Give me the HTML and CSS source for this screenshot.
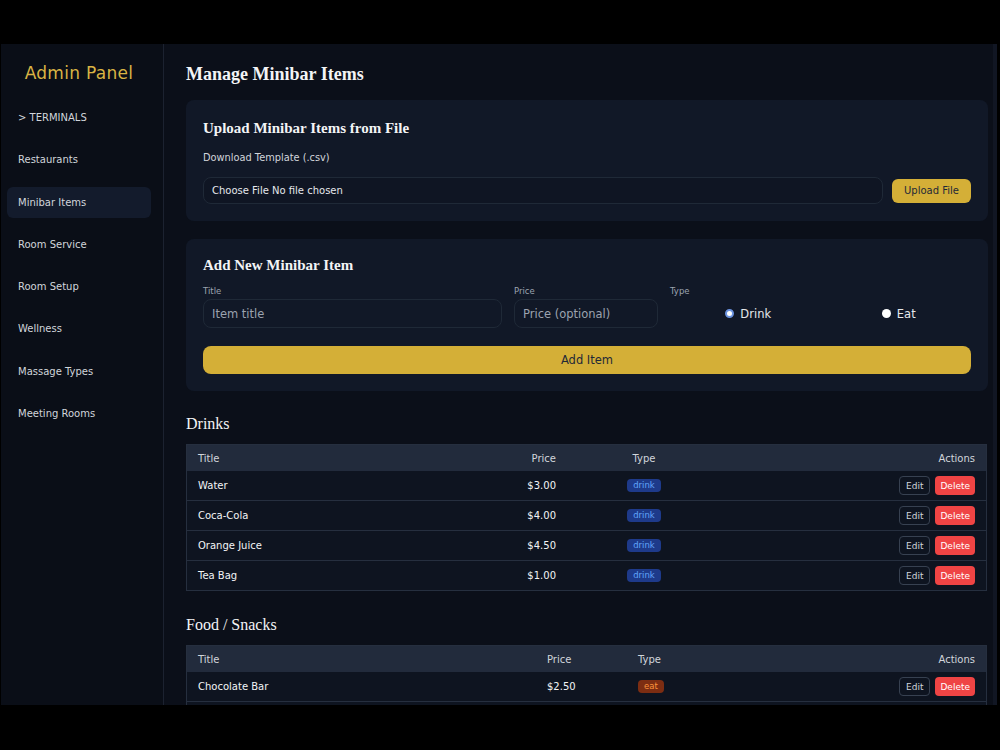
FILE: index.html
```html
<!DOCTYPE html>
<html lang="en">
<head>
    <meta charset="UTF-8">
    <meta name="viewport" content="width=device-width, initial-scale=1.0">
    <title>Admin Panel - Minibar Items</title>
    <link rel="stylesheet" href="styles.css">
</head>
<body>
    <div class="screen">
        <aside class="sidebar">
            <div class="brand">Admin Panel</div>
            <nav class="nav">
                <a class="nav-link">&gt; TERMINALS</a>
                <a class="nav-link">Restaurants</a>
                <a class="nav-link active">Minibar Items</a>
                <a class="nav-link">Room Service</a>
                <a class="nav-link">Room Setup</a>
                <a class="nav-link">Wellness</a>
                <a class="nav-link">Massage Types</a>
                <a class="nav-link">Meeting Rooms</a>
            </nav>
        </aside>

        <main class="main">
            <h1 class="page-title">Manage Minibar Items</h1>

            <section class="card">
                <h2 class="card-title">Upload Minibar Items from File</h2>
                <a class="template-link">Download Template (.csv)</a>
                <div class="upload-row">
                    <div class="file-input">Choose File No file chosen</div>
                    <button class="btn-gold btn-upload">Upload File</button>
                </div>
            </section>

            <section class="card form-card">
                <h2 class="card-title">Add New Minibar Item</h2>
                <div class="form-row">
                    <div class="field field-title">
                        <label>Title</label>
                        <input type="text" placeholder="Item title">
                    </div>
                    <div class="field field-price">
                        <label>Price</label>
                        <input type="text" placeholder="Price (optional)">
                    </div>
                    <div class="field field-type">
                        <label>Type</label>
                        <div class="radios">
                            <span class="radio"><span class="dot checked"></span>Drink</span>
                            <span class="radio"><span class="dot"></span>Eat</span>
                        </div>
                    </div>
                </div>
                <button class="btn-gold btn-add">Add Item</button>
            </section>

            <h3 class="section-title">Drinks</h3>
            <table class="items">
                <thead>
                    <tr><th>Title</th><th class="col-price">Price</th><th class="col-type">Type</th><th class="col-actions">Actions</th></tr>
                </thead>
                <tbody>
                    <tr><td>Water</td><td class="col-price">$3.00</td><td class="col-type"><span class="badge drink">drink</span></td><td class="col-actions"><button class="btn-edit">Edit</button><button class="btn-delete">Delete</button></td></tr>
                    <tr><td>Coca-Cola</td><td class="col-price">$4.00</td><td class="col-type"><span class="badge drink">drink</span></td><td class="col-actions"><button class="btn-edit">Edit</button><button class="btn-delete">Delete</button></td></tr>
                    <tr><td>Orange Juice</td><td class="col-price">$4.50</td><td class="col-type"><span class="badge drink">drink</span></td><td class="col-actions"><button class="btn-edit">Edit</button><button class="btn-delete">Delete</button></td></tr>
                    <tr><td>Tea Bag</td><td class="col-price">$1.00</td><td class="col-type"><span class="badge drink">drink</span></td><td class="col-actions"><button class="btn-edit">Edit</button><button class="btn-delete">Delete</button></td></tr>
                </tbody>
            </table>

            <h3 class="section-title food-title">Food / Snacks</h3>
            <table class="items food">
                <thead>
                    <tr><th>Title</th><th class="col-price">Price</th><th class="col-type">Type</th><th class="col-actions">Actions</th></tr>
                </thead>
                <tbody>
                    <tr><td>Chocolate Bar</td><td class="col-price">$2.50</td><td class="col-type"><span class="badge eat">eat</span></td><td class="col-actions"><button class="btn-edit">Edit</button><button class="btn-delete">Delete</button></td></tr>
                    <tr class="spacer"><td colspan="4"></td></tr>
                </tbody>
            </table>
        </main>
    </div>
</body>
</html>
```

FILE: styles.css
```css
html, body {
    margin: 0;
    padding: 0;
    background: #000;
}
body {
    font-family: "DejaVu Sans", "Open Sans", sans-serif;
    color: #e5e7eb;
}
.screen {
    margin: 44px 3px 0 1px;
    height: 661px;
    display: flex;
    overflow: hidden;
    background: #0b0f19;
    border-right: 4px solid #111623;
}
.sidebar {
    width: 163px;
    flex-shrink: 0;
    background: #0a0e17;
    border-right: 1px solid #1c2230;
    padding: 0 12px 0 6px;
    box-sizing: border-box;
}
.brand {
    color: #d9b444;
    font-size: 17px;
    text-align: center;
    margin: 18px 0 18px;
    line-height: 22px;
    letter-spacing: 0.3px;
}
.nav {
    display: flex;
    flex-direction: column;
    gap: 11.3px;
}
.nav-link {
    display: block;
    font-size: 10px;
    color: #d1d5db;
    padding: 0 11px;
    height: 31px;
    line-height: 31px;
    border-radius: 6px;
}
.nav-link.active {
    background: #131b2c;
}

.main {
    flex: 1;
    padding: 0 5px 0 22px;
}
.page-title {
    font-family: "Liberation Serif", "DejaVu Serif", serif;
    font-size: 18px;
    font-weight: bold;
    color: #f3f4f6;
    margin: 19px 0 15px;
    line-height: 22px;
}
.card {
    background: #111827;
    border-radius: 8px;
    padding: 18px 17px 17px 17px;
    margin-bottom: 18px;
}
.card-title {
    font-family: "Liberation Serif", "DejaVu Serif", serif;
    font-size: 15px;
    font-weight: bold;
    color: #f3f4f6;
    margin: 0 0 13px;
    line-height: 20px;
}
.form-card {
    padding-top: 16px;
}
.form-card .card-title {
    margin-bottom: 10px;
}
.template-link {
    display: block;
    font-size: 9.8px;
    color: #d1d5db;
    line-height: 14px;
    margin-bottom: 12px;
}
.upload-row {
    display: flex;
    align-items: center;
    gap: 9px;
}
.file-input {
    flex: 1;
    height: 25px;
    line-height: 25px;
    border: 1px solid #1f2937;
    border-radius: 8px;
    padding: 0 8px;
    font-size: 10px;
    color: #e5e7eb;
    background: #0f1523;
}
.btn-gold {
    background: #d4af37;
    color: #1f2937;
    border: none;
    cursor: pointer;
    font-family: inherit;
}
.btn-upload {
    width: 79px;
    height: 24px;
    border-radius: 6px;
    font-size: 10px;
    padding: 0;
}
.form-row {
    display: flex;
    gap: 12px;
    margin-bottom: 18px;
}
.field label {
    display: block;
    font-size: 8.5px;
    color: #9ca3af;
    line-height: 12px;
    margin-bottom: 2px;
}
.field input {
    box-sizing: border-box;
    width: 100%;
    height: 29px;
    background: #111827;
    border: 1px solid #1f2937;
    border-radius: 8px;
    padding: 0 8px;
    font-family: inherit;
    font-size: 11.5px;
    color: #e5e7eb;
}
.field input::placeholder {
    color: #9ca3af;
}
.field-title {
    width: 299px;
}
.field-price {
    width: 144px;
}
.field-type {
    flex: 1;
}
.radios {
    display: flex;
    justify-content: space-around;
    height: 29px;
    align-items: center;
}
.radio {
    display: flex;
    align-items: center;
    gap: 6px;
    font-size: 11.5px;
    color: #e5e7eb;
}
.dot {
    width: 9px;
    height: 9px;
    border-radius: 50%;
    background: #fff;
    box-sizing: border-box;
}
.dot.checked {
    border: 2.5px solid #6b93e0;
}
.btn-add {
    width: 100%;
    height: 28px;
    border-radius: 8px;
    font-size: 11.5px;
}

.section-title {
    font-family: "Liberation Serif", "DejaVu Serif", serif;
    font-weight: normal;
    font-size: 16px;
    color: #f3f4f6;
    margin: 23px 0 10px;
    line-height: 20px;
}
.food-title {
    margin-top: 24px;
}
.items {
    width: 801px;
    border-collapse: collapse;
    border: 1px solid #262f3f;
    font-size: 10px;
}
.items th {
    background: #222b3c;
    color: #d1d5db;
    font-weight: normal;
    height: 26px;
    padding: 0 11px;
    text-align: left;
}
.items td {
    background: #0e1420;
    color: #f3f4f6;
    height: 29px;
    padding: 0 11px;
    border-top: 1px solid #262f3f;
}
.items tbody tr:first-child td {
    border-top: none;
}
.items .col-price {
    text-align: right;
    width: 60px;
}
.items .col-type {
    text-align: center;
    width: 132px;
}
.items .col-actions {
    text-align: right;
    width: 243px;
}
.food .col-price {
    text-align: left;
    width: 69px;
}
.food .col-type {
    text-align: left;
    width: 120px;
}
.food .col-actions {
    width: 195px;
}
.items .spacer td {
    height: 29px;
}
.badge {
    display: inline-block;
    font-size: 8.5px;
    padding: 0 6px;
    height: 13px;
    line-height: 13px;
    border-radius: 4px;
}
.badge.drink {
    background: #1e3a8a;
    color: #60a5fa;
}
.badge.eat {
    background: #7c2d12;
    color: #fb923c;
}
.btn-edit, .btn-delete {
    font-family: inherit;
    font-size: 9px;
    height: 19px;
    border-radius: 4px;
    cursor: pointer;
    vertical-align: middle;
}
.btn-edit {
    background: transparent;
    color: #d1d5db;
    border: 1px solid #374151;
    padding: 0 6px;
    margin-right: 5px;
}
.btn-delete {
    background: #ef4444;
    color: #fff;
    border: none;
    padding: 0 5px;
}
```
